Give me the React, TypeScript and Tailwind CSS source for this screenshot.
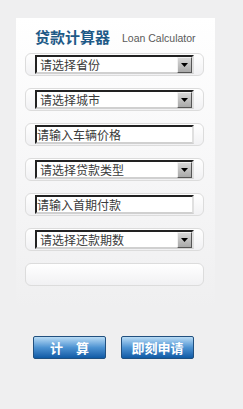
import React from "react";

const font = { fontFamily: '"Noto Sans CJK SC", "Noto Sans", sans-serif' };

function Arrow() {
  return (
    <div className="w-[15px] h-[16px] flex items-center justify-center bg-gradient-to-b from-[#d8d8d8] to-[#a9a9a9] border border-t-[#f2f2f2] border-l-[#f2f2f2] border-r-[#555] border-b-[#555]">
      <svg width="7" height="4" viewBox="0 0 7 4">
        <polygon points="0,0 7,0 3.5,4" fill="#000" />
      </svg>
    </div>
  );
}

function Row({ text, select }: { text?: string; select?: boolean }) {
  return (
    <div className="h-[23px] w-[179px] ml-[9px] rounded-[6px] border border-[#dcdcdc] bg-gradient-to-b from-white to-[#f1f1f3] flex items-center pl-[9px]">
      {text !== undefined && (
        <div className="w-[159px] h-[19px] bg-white border-[2px] border-t-[#222] border-l-[#222] border-r-[#e0e0e0] border-b-[#d0d0d0] flex items-center justify-between">
          <span className={`text-[12px] leading-none text-[#3a3a3a] ${select ? "pl-[3px]" : "pl-[0px]"}`} style={font}>
            {text}
          </span>
          {select && <Arrow />}
        </div>
      )}
    </div>
  );
}

function Btn({ label }: { label: string }) {
  return (
    <div className="w-[73px] h-[23px] rounded-[2px] border border-[#21507f] bg-gradient-to-b from-[#b9dcf5] via-[#4d93d2] to-[#0e5aa5] flex items-center justify-center">
      <span className="text-white text-[13px] font-bold leading-none" style={font}>
        {label}
      </span>
    </div>
  );
}

export default function App() {
  return (
    <div className="w-[243px] h-[409px] bg-[#efeff0] overflow-hidden">
      <div className="ml-[16px] mt-[18px] w-[199px] h-[290px] bg-gradient-to-b from-white via-[#f7f7f8] to-[#efeff0]">
        <div className="flex items-end pt-[8px] pl-[19px] h-[26px]">
          <span className="text-[15px] font-bold text-[#1e5a87] leading-none" style={font}>
            贷款计算器
          </span>
          <span className="ml-[12px] text-[10.5px] text-[#5a5a5a] leading-none mb-[1px]" style={{ fontFamily: '"Liberation Sans", Arial, sans-serif' }}>
            Loan Calculator
          </span>
        </div>
        <div className="flex flex-col gap-[12px] mt-[9px]">
          <Row text="请选择省份" select />
          <Row text="请选择城市" select />
          <Row text="请输入车辆价格" />
          <Row text="请选择贷款类型" select />
          <Row text="请输入首期付款" />
          <Row text="请选择还款期数" select />
          <Row />
        </div>
      </div>
      <div className="flex gap-[15px] ml-[33px] mt-[28px]">
        <Btn label="计　算" />
        <Btn label="即刻申请" />
      </div>
    </div>
  );
}
